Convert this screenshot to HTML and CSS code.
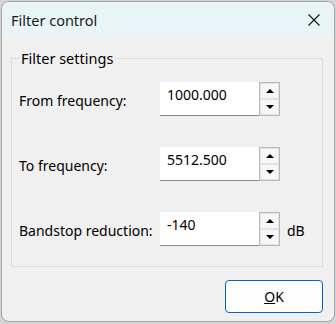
FILE: index.html
```html
<!DOCTYPE html>
<html lang="en">
<head>
  <meta charset="UTF-8">
  <title>Filter control</title>
  <link rel="stylesheet" href="styles.css">
</head>
<body>
  <div class="window">
    <div class="titlebar">
      <span class="title">Filter control</span>
      <svg class="close" width="12" height="12" viewBox="0 0 12 12">
        <path d="M0.5 0.5 L11.5 11.5 M11.5 0.5 L0.5 11.5" stroke="#1a1a1a" stroke-width="1.2" fill="none"/>
      </svg>
    </div>
    <div class="content">
      <fieldset class="group">
        <legend>Filter settings</legend>
        <div class="rows">
          <div class="row">
            <label class="lbl">From frequency:</label>
            <div class="spin">
              <input class="num" type="text" value="1000.000">
              <div class="arrows">
                <span class="btn"><i class="up"></i></span>
                <span class="btn"><i class="down"></i></span>
              </div>
            </div>
          </div>
          <div class="row">
            <label class="lbl">To frequency:</label>
            <div class="spin">
              <input class="num" type="text" value="5512.500">
              <div class="arrows">
                <span class="btn"><i class="up"></i></span>
                <span class="btn"><i class="down"></i></span>
              </div>
            </div>
          </div>
          <div class="row">
            <label class="lbl">Bandstop reduction:</label>
            <div class="spin">
              <input class="num" type="text" value="-140">
              <div class="arrows">
                <span class="btn"><i class="up"></i></span>
                <span class="btn"><i class="down"></i></span>
              </div>
            </div>
            <span class="unit">dB</span>
          </div>
        </div>
      </fieldset>
      <div class="footer">
        <button class="ok"><u>O</u>K</button>
      </div>
    </div>
  </div>
</body>
</html>
```
FILE: styles.css
```css
html, body { margin: 0; padding: 0; }
body { background: #d4d4d4; font-family: "Noto Sans", sans-serif; font-size: 14px; color: #000; width: 336px; height: 324px; overflow: hidden; }
.window { margin: 1px 1px 0 1px; height: 319px; border: 1px solid #a3a3a3; border-radius: 8px; overflow: hidden; background: #f0f0f0; display: flex; flex-direction: column; }
.titlebar { height: 35px; background: #e9f4f6; display: flex; align-items: center; justify-content: space-between; padding: 0 14px 0 9px; }
.title { color: #1a1a1a; font-size: 14.5px; margin-top: 1px; }
.close { display: block; }
.content { flex: 1; display: flex; flex-direction: column; }
.group { margin: 11px 11px 0 9px; padding: 0 0 20px 7px; border: 1px solid #dcdcdc; }
.group legend { padding: 0 2px; color: #000; font-size: 14.5px; }
.rows { display: flex; flex-direction: column; gap: 31px; padding-top: 14px; }
.row { display: flex; align-items: center; height: 34px; }
.lbl { width: 141px; flex-shrink: 0; white-space: nowrap; padding-top: 3px; }
.spin { display: flex; height: 34px; flex-shrink: 0; }
.num { width: 99px; height: 34px; box-sizing: border-box; border: none; border-bottom: 1px solid #8a8a8a; background: #fff; font: inherit; padding: 0 0 8px 7px; margin: 0; outline: none; }
.arrows { width: 21px; box-sizing: border-box; border: 1px solid #b9b9b9; display: flex; flex-direction: column; }
.btn { flex: 1; border: 1px solid #e4e4e4; background: #f7f7f7; display: flex; align-items: center; justify-content: center; }
.up { width: 0; height: 0; border-left: 4px solid transparent; border-right: 4px solid transparent; border-bottom: 4px solid #000; }
.down { width: 0; height: 0; border-left: 4px solid transparent; border-right: 4px solid transparent; border-top: 4px solid #000; }
.unit { margin-left: 7px; padding-top: 3px; }
.footer { display: flex; justify-content: flex-end; padding: 13px 11px 0 0; }
.ok { width: 98px; height: 33px; border: 1px solid #0067c0; border-radius: 4px; background: #fdfdfd; font: inherit; color: #000; padding: 0; }
```
